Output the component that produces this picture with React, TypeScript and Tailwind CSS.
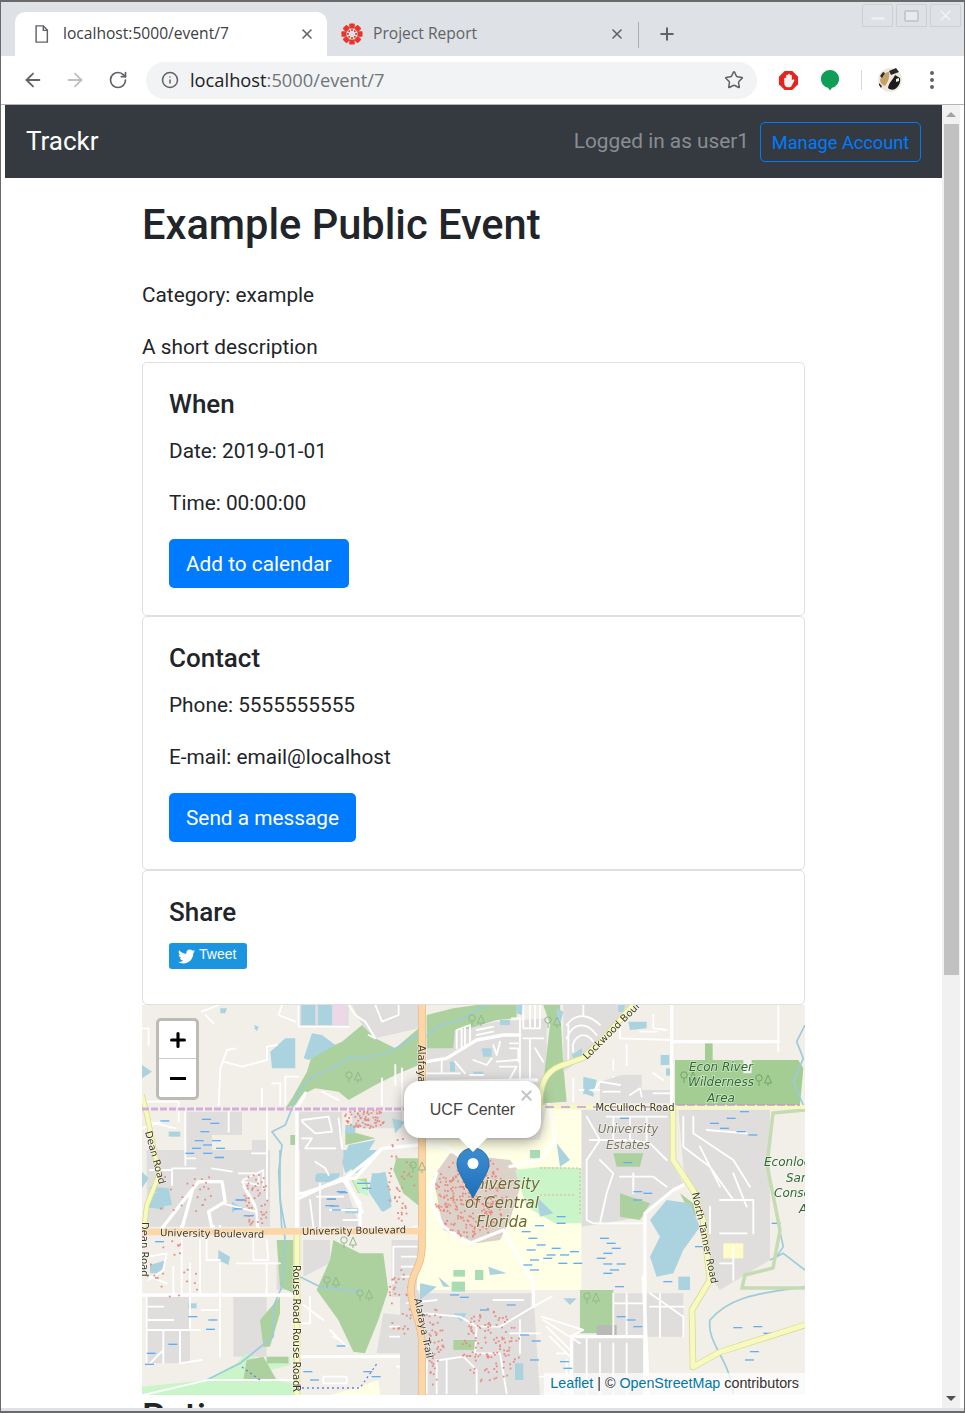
import type { ReactNode } from 'react'
import { ArrowLeft, ArrowRight, RotateCw, Info, Star, X, Plus } from 'lucide-react'
import { FaTwitter } from 'react-icons/fa'

// ─── Map colours ──────────────────────────────────────────────────────────────

const GREY = '#dfdedd'
const GREEN = '#add19e'
const MINT = '#c9f5c9'
const WATER = '#aad3df'
const CAMPUS = '#ffffe5'

// Each layer is traced at 3x from one part of the map, so coordinates are
// local to its origin and scaled back down by the group transform.
interface MapLayer {
  x: number
  y: number
  fills: [string, string][]
  rivers?: string[]
  roads: string
  mains?: string
  dashes: [number, number][]
}

const LAYERS: MapLayer[] = [
  // lower left
  {
    x: 130,
    y: 1150,
    fills: [
      [GREY, 'M50 0L420 0L420 230L50 230Z'],
      ['#f2efe9', 'M36 232L860 232L860 760L36 760Z'],
      [GREY, 'M50 440L180 440L180 640L50 640Z'],
      [GREY, 'M310 440L410 440L410 620L310 620Z'],
      [GREY, 'M440 340L480 340L480 420L440 420Z'],
      [GREY, 'M760 490L865 500L865 610L740 610Z'],
      [GREY, 'M520 270L600 270L600 340L520 380Z'],
      [GREY, 'M785 270L865 270L865 440L785 440Z'],
      [GREY, 'M510 0L640 0L640 90L690 230L510 230Z'],
      [GREEN, 'M800 20L860 60L870 170L820 130L790 60Z'],
      ['#b9dc8f', 'M665 90L710 85L715 120L685 130Z'],
      [GREEN, 'M610 270L690 310L760 310L775 420L745 510L705 610L670 605L625 510L560 420L600 330Z'],
      [GREEN, 'M440 270L490 270L490 430L450 410Z'],
      [GREEN, 'M390 510L450 440L450 490L420 590L400 590Z'],
      [MINT, 'M36 710L230 690L320 640L350 610L400 640L480 620L480 645L420 660L430 690L490 700L490 735L36 735Z'],
      [GREEN, 'M350 630L400 620L440 690L340 690Z'],
      [GREEN, 'M410 620L475 620L475 640L410 640Z'],
      [CAMPUS, 'M600 735L690 710L745 690L750 735Z'],
      [WATER, 'M60 110L120 115L100 180L55 170Z'],
      [WATER, 'M290 145L330 170L290 200Z'],
      [WATER, 'M640 0L740 0L680 70L640 40Z'],
      [WATER, 'M725 70L765 70L785 170L760 185L730 130Z'],
      [WATER, 'M265 300L300 320L295 345L265 330Z'],
      [WATER, 'M560 70L630 70L620 95L560 95Z'],
      [WATER, 'M645 175L690 175L690 190L645 190Z'],
      [WATER, 'M175 460L200 460L200 475L175 475Z'],
      [WATER, 'M60 345L110 330L90 370L60 370Z'],
    ],
    rivers: [
      'M450 0L450 130L455 230L465 260L460 400L430 470L430 560L380 600L330 640L230 690',
      'M510 380L570 410L690 425',
    ],
    roads:
      'M155 260L155 435M210 270L210 430M130 350L130 435M180 340L180 435M270 340L270 430M370 270L370 330L415 330L410 270M50 440L50 640M50 470L100 470M50 510L130 510M50 540L210 540M100 540L100 640M150 540L150 640L215 630M270 440L270 620M180 440L180 540M215 480L265 480M55 320L110 310L100 360L55 390M60 380L110 400M230 270L230 330L270 330M320 340L450 340M410 340L410 435M60 640L100 600M580 680L650 680L650 700L580 700ZM40 735L235 690L490 690M540 150L550 230M790 290L860 290M790 290L790 400M815 320L860 320M815 350L860 350M815 380L860 380M520 465L580 510M540 440L540 520L490 520M600 540L650 590M610 560L630 570M780 530L860 530M780 560L860 560M800 650L860 650M810 670L860 670M890 650L950 650M60 60L130 60L130 130L60 130M135 70L300 70L300 130M220 0L220 90M340 90L400 60L400 120M340 110L380 180L380 230M270 180L270 230M560 140L640 140M600 180L680 180M570 100L570 230M640 210L690 210',
    mains:
      'M36 435L490 435M515 620L865 620M500 130L520 130L640 90L740 10M640 90L690 160L690 230M500 0L500 230M100 230L175 120L215 90L285 105L290 140L240 180L250 230M155 230L200 110',
    dashes: [[220, 10], [255, 22], [165, 10], [320, 150], [345, 197], [315, 175], [590, 148], [600, 168], [620, 125], [695, 100], [235, 510], [175, 500], [228, 538], [115, 583], [50, 610], [45, 643], [620, 588], [520, 665], [700, 665], [540, 690], [725, 680], [75, 275]],
  },
  // upper left
  {
    x: 142,
    y: 1005,
    fills: [
      [GREY, 'M130 320L300 320L300 390L210 390L210 490L130 490Z'],
      [GREY, 'M90 490L270 490L270 660L60 660Z'],
      [GREY, 'M330 405L375 405L375 490L330 490Z'],
      [GREY, 'M470 320L600 320L600 435L470 435Z'],
      [GREY, 'M470 0L620 0L620 65L470 65Z'],
      [GREY, 'M630 0L830 0L830 70L700 100L660 60Z'],
      [GREY, 'M630 320L780 320L780 370L630 370Z'],
      [GREY, 'M520 445L550 445L550 490L520 490Z'],
      ['#efd7ea', 'M575 0L610 0L610 65L575 65Z'],
      [GREEN, 'M430 310L450 280L495 200L510 150L600 110L660 60L700 100L760 130L830 70L830 180L760 210L700 240L620 285L590 260L520 250L480 270L460 300Z'],
      [GREEN, 'M610 375L700 400L610 420Z'],
      [GREEN, 'M760 460L830 460L830 590L780 540Z'],
      [GREEN, 'M445 390L460 390L460 420L445 420Z'],
      [WATER, 'M478 0L520 0L520 60L478 60Z'],
      [WATER, 'M528 0L570 0L570 60L528 60Z'],
      [WATER, 'M385 140L430 100L460 100L460 190L390 190Z'],
      [WATER, 'M485 160L510 85L540 90L580 120L500 165Z'],
      [WATER, 'M600 470L620 420L700 405L660 470L610 505Z'],
      [WATER, 'M690 510L730 500L750 590L720 620L680 560Z'],
      [WATER, 'M750 340L790 350L760 385Z'],
      [WATER, 'M20 570L80 550L90 600L20 610Z'],
      [WATER, 'M0 180L30 200L0 220Z'],
      [WATER, 'M0 500L20 520L0 550Z'],
      [WATER, 'M520 510L580 510L570 530L520 530Z'],
      [WATER, 'M80 380L115 380L115 395L80 395Z'],
      [WATER, 'M610 360L640 360L640 385L610 385Z'],
      [WATER, 'M338 60L350 65L345 78L338 72Z'],
      [WATER, 'M235 10L255 10L250 25L235 25Z'],
      [MINT, 'M630 520L670 530L680 575L650 560Z'],
    ],
    rivers: ['M830 90L770 125L720 150L620 160L570 190L510 215L470 260L450 310L430 360L390 380L420 420L410 500L415 590L430 670'],
    roads:
      'M230 300L235 190L255 135L280 130M245 170L300 185L375 165L375 125L405 120M360 250L360 305M390 235L415 235L415 300M430 215L470 215M430 300L430 215M470 0L470 65L620 65M540 260L590 285M130 320L130 480M130 460L160 460M160 490L90 490L90 540M210 490L270 500M260 320L260 380M480 345L560 335L570 380L520 385L480 350M480 400L510 400L490 430L580 430M590 340L600 430M375 320L375 585M330 445L375 445M520 470L550 490L560 510M620 0L640 30L670 50L700 100M680 90L700 100M700 0L720 50L770 30L770 0M760 180L760 240M720 220L720 300M780 190L780 300M10 290L110 290L110 350M0 370L60 350M20 350L100 370M180 20L230 0M190 30L215 55M420 0L410 30L460 50M0 70L20 70M20 70L20 120M290 505L350 505L350 540L300 530M300 530L340 600L350 670M240 595L340 620',
    mains: 'M465 670L465 310L490 265M470 580L600 520L640 520L720 430L830 420M610 520L660 620M60 670L130 580L170 530L240 530L250 590L200 620L210 670M120 670L150 560',
    dashes: [[180, 343], [205, 355], [175, 380], [158, 407], [210, 407], [183, 420], [150, 430], [222, 430], [130, 445], [183, 445], [218, 458], [55, 348], [645, 535], [660, 550], [555, 582], [550, 602], [570, 615], [590, 563], [280, 585], [275, 612], [305, 632]],
  },
  // east of Alafaya, north of the boundary line
  {
    x: 420,
    y: 1005,
    fills: [
      [GREY, 'M20 130L110 75L230 50L380 40L380 300L20 300Z'],
      [GREEN, 'M20 130L20 30L100 10L170 0L290 0L290 40L230 45L150 70L105 75L100 130L60 130Z'],
      [WATER, 'M290 0L310 0L305 30L290 25Z'],
      [WATER, 'M240 45L270 45L270 60L240 60Z'],
      [WATER, 'M185 130L215 130L215 155L190 155Z'],
      [WATER, 'M90 170L105 170L105 200L90 200Z'],
      [WATER, 'M160 200L190 200L190 210L160 210Z'],
    ],
    rivers: ['M20 95L60 60L110 50L160 20L200 0'],
    roads:
      'M110 130L110 75L150 60L150 110M125 130L125 70M135 120L135 65M170 75L220 65M170 90L220 80M275 40L300 40L300 80M310 0L310 70L360 70L360 0M330 0L330 70M345 0L345 70M300 80L300 240M310 100L370 100M240 110L230 150L220 120M270 115L300 115M270 130L295 130L295 170M160 165L200 180L215 160M230 170L290 165M20 205L120 205M65 170L65 205M105 170L135 205M240 185L290 185L270 220M330 100L330 220M345 130L370 170M150 210L190 210M40 230L40 300M80 240L80 300M120 240L120 300M160 235L160 300M200 240L240 240L240 300M280 240L280 300M320 240L320 300M60 270L300 260',
    mains: 'M20 170L80 160L170 105L250 90L300 90M20 230L350 225',
    dashes: [],
  },
  // lower right
  {
    x: 400,
    y: 1060,
    fills: [
      [CAMPUS, 'M70 240L420 240L440 140L545 150L545 690L50 690Z'],
      ['#f2efe9', 'M545 150L815 150L815 700L545 700Z'],
      [GREY, 'M545 150L815 150L815 310L850 370L730 470L545 500Z'],
      [GREY, 'M835 150L1110 150L1110 600L960 690L930 650L905 450L850 320Z'],
      ['#ddd2ca', 'M100 350L150 280L330 300L370 350L330 480L300 540L230 550L130 510Z'],
      [MINT, 'M345 330L430 320L545 325L545 490L465 490L380 440Z'],
      [GREY, 'M0 700L400 700L420 1005L0 1005Z'],
      [GREY, 'M515 830L730 830L730 1005L515 1005Z'],
      [GREY, 'M640 700L850 700L850 830L640 830Z'],
      [GREEN, 'M540 690L640 690L640 820L540 820Z'],
      ['#b9b9b9', 'M590 795L650 795L650 825L590 825Z'],
      [GREEN, 'M160 840L225 840L225 870L160 870Z'],
      [GREEN, 'M640 280L730 280L720 320L650 320Z'],
      [GREEN, 'M660 400L750 430L720 480L660 470Z'],
      [GREEN, 'M840 400L880 430L890 470L860 440Z'],
      ['#fffcc8', 'M970 550L1030 550L1030 595L970 595Z'],
      ['#a9dbb4', 'M155 665L195 665L195 695L155 695Z'],
      ['#a9dbb4', 'M160 630L195 630L195 650L160 650Z'],
      ['#a9dbb4', 'M225 630L250 630L250 660L225 660Z'],
      ['#a9dbb4', 'M390 270L420 270L420 295L390 295Z'],
      [WATER, 'M750 480L800 420L870 430L900 500L850 570L820 640L770 650L750 590L780 530Z'],
      [WATER, 'M410 410L460 460L420 470Z'],
      [WATER, 'M470 250L510 300L480 320Z'],
      [WATER, 'M60 670L110 680L60 720Z'],
      [WATER, 'M115 650L150 680L130 680Z'],
      [WATER, 'M265 620L320 640L270 645Z'],
      [WATER, 'M835 650L870 650L870 690L835 690Z'],
      [WATER, 'M490 715L530 715L510 735Z'],
      [WATER, 'M160 760L200 760L185 785Z'],
      [WATER, 'M440 30L480 90L440 110Z'],
      [WATER, 'M550 50L590 60L580 110L550 100Z'],
      [WATER, 'M345 910L370 910L370 960L345 960Z'],
    ],
    rivers: ['M1215 680C1100 700 1000 700 930 780C920 850 990 900 1000 1000M1110 600L1150 580L1215 630M1130 470L1150 560L1130 590'],
    roads:
      'M560 170L600 240L560 300L560 480L580 490L730 490M600 300L640 340L620 400L600 490M640 170L640 240M690 170L690 240L750 250L800 300M740 170L740 250M570 240L680 240M660 350L760 350L800 380M700 340L700 400M620 170L800 170M850 170L850 260L930 320L1000 420M880 170L880 220L1000 300L1050 380M920 210L1040 220M900 260L960 380M1000 340L1040 440M960 420L1060 420L1060 520M930 440L930 520M960 520L1040 520M960 610L1000 610M1000 560L1000 660M640 730L730 730M680 700L680 830M780 700L780 830M750 740L850 740M400 740L455 710M75 760L180 770L230 800L300 800L400 740M230 800L225 880L300 880L320 1000M425 770L550 810L510 830M640 700L640 825M750 700L850 770L850 830M20 730L110 720M280 720L370 720M120 900L190 890L230 930L230 1000M80 900L80 1000M110 900L110 1000M140 900L140 1000M560 830L560 1000M600 850L600 1000M640 850L640 1000M680 850L680 1000M420 950L515 950M330 820L420 820M360 780L360 880M430 780L540 850M440 800L510 870M450 830L510 890M540 90L640 90L640 50M640 0L640 30M680 60L720 90M760 40L790 60M700 110L810 110M470 880L500 880M500 900L500 1000',
    mains:
      'M735 1000L735 460L820 390L850 375M515 830L730 830M515 830L515 1000M75 250L140 260L180 290M100 440L130 500L210 550L310 510L400 670L400 740M330 320L420 300L465 240L440 100L420 80M100 440L90 400L110 340M15 510L60 500M730 650L745 1000',
    dashes: [[365, 515], [405, 497], [470, 470], [470, 490], [385, 535], [410, 555], [455, 565], [380, 570], [440, 585], [480, 585], [510, 575], [390, 600], [430, 595], [475, 610], [520, 610], [370, 615], [390, 630], [600, 535], [620, 550], [610, 580], [635, 565], [590, 595], [610, 612], [650, 612], [630, 630], [610, 640], [645, 680], [790, 665], [885, 560], [1115, 490], [1000, 803], [1060, 800], [1090, 820], [1020, 848], [1050, 875], [1035, 900], [660, 175], [670, 308], [700, 395], [730, 400], [700, 420], [650, 770], [680, 780], [700, 800], [150, 705], [180, 712], [240, 750], [320, 735], [360, 825], [395, 843], [480, 905], [490, 925], [390, 900], [930, 190], [980, 175], [960, 205], [1020, 155], [1045, 225], [1010, 215]],
  },
  // upper right
  {
    x: 540,
    y: 1005,
    fills: [
      [GREEN, 'M10 230L30 60L10 0L60 0L70 180L80 290L10 295Z'],
      [GREEN, 'M195 0L240 50L190 60L180 30Z'],
      [GREY, 'M70 0L280 0L130 160L70 200Z'],
      [GREY, 'M245 210L305 210L305 255L395 255L395 295L180 295L180 230Z'],
      ['#a3cd92', 'M405 165L495 165L495 115L518 115L518 165L610 165L610 205L635 205L635 165L775 165L790 190L780 300L405 300Z'],
      [WATER, 'M95 150L125 130L130 155L100 160Z'],
      [WATER, 'M140 220L170 225L150 255L130 270Z'],
      [WATER, 'M265 50L320 50L320 70L270 75Z'],
      [WATER, 'M362 150L388 150L388 180L362 180Z'],
      [WATER, 'M378 190L392 190L392 212L378 212Z'],
      [WATER, 'M50 10L70 20L60 60L50 50Z'],
      [WATER, 'M235 0L255 0L250 20L235 20Z'],
    ],
    rivers: ['M795 60L770 110L790 160L760 230L790 300'],
    roads:
      'M80 60C110 20 150 30 180 60M80 100C100 50 140 50 170 90M100 140C90 100 130 70 160 110M85 60L85 170M130 30L130 0M240 100L395 105M340 30L340 70L380 75M260 120L260 180M715 0L715 140M240 60L240 100M300 80L350 80M160 260L180 230L240 240M190 260L240 260M270 270L300 250L305 275M340 265L395 265M100 220L100 290',
    mains: 'M395 0L395 300M395 110L715 110',
    dashes: [],
  },
]

// deterministic scatter of small red buildings
function scatter(cx: number, cy: number, rx: number, ry: number, n: number, seed: number) {
  const out: [number, number][] = []
  let s = seed
  for (let i = 0; i < n; i++) {
    s = (s * 9301 + 49297) % 233280
    const a = (s / 233280) * Math.PI * 2
    s = (s * 9301 + 49297) % 233280
    const r = Math.sqrt(s / 233280)
    out.push([cx + Math.cos(a) * rx * r, cy + Math.sin(a) * ry * r])
  }
  return out
}

const RED_DOTS = [
  ...scatter(470, 1195, 36, 42, 260, 7),
  ...scatter(490, 1345, 30, 38, 120, 11),
  ...scatter(432, 1345, 12, 40, 50, 21),
  ...scatter(364, 1118, 22, 10, 70, 31),
  ...scatter(255, 1200, 14, 28, 45, 41),
  ...scatter(180, 1190, 35, 25, 22, 51),
  ...scatter(400, 1300, 12, 35, 35, 61),
  ...scatter(400, 1175, 14, 45, 40, 71),
  ...scatter(175, 1270, 30, 30, 22, 81),
]

function TreeMark({ x, y, color = '#8fb98a' }: { x: number; y: number; color?: string }) {
  return (
    <g fill="none" stroke={color} strokeWidth={1}>
      <circle cx={x} cy={y} r={3.2} />
      <path d={`M${x} ${y + 3}v5M${x + 9} ${y - 3}l-3.5 8h7zM${x + 9} ${y + 5}v3`} />
    </g>
  )
}

function MapLabel({ x, y, children, rotate, size = 10, fill = '#3d3826', anchor = 'middle', italic = false }: {
  x: number
  y: number
  children: string
  rotate?: number
  size?: number
  fill?: string
  anchor?: 'middle' | 'start'
  italic?: boolean
}) {
  return (
    <text
      x={x}
      y={y}
      fontSize={size}
      fill={fill}
      textAnchor={anchor}
      fontStyle={italic ? 'italic' : undefined}
      fontFamily="'DejaVu Sans', sans-serif"
      stroke="#ffffff"
      strokeOpacity={0.5}
      strokeWidth={1.4}
      paintOrder="stroke"
      transform={rotate !== undefined ? `rotate(${rotate} ${x} ${y})` : undefined}
    >
      {children}
    </text>
  )
}

// ─── Map ──────────────────────────────────────────────────────────────────────

function MapDrawing() {
  return (
    <svg viewBox="142 1005 663 390" width={663} height={390} className="block blur-[0.45px]">
      <rect x={142} y={1005} width={663} height={390} fill="#f2efe9" />

      {LAYERS.map((l, i) => (
        <g key={i} transform={`translate(${l.x} ${l.y}) scale(0.3333)`}>
          {l.fills.map(([c, d], j) => <path key={j} d={d} fill={c} />)}
          <g fill="none" stroke="#9ccbdb" strokeWidth={5} strokeLinejoin="round">
            {l.rivers?.map((d, j) => <path key={j} d={d} />)}
          </g>
          <path d={l.roads} fill="none" stroke="#ffffff" strokeWidth={5.5} strokeLinejoin="round" strokeLinecap="round" />
          {l.mains && <path d={l.mains} fill="none" stroke="#ffffff" strokeWidth={10} strokeLinejoin="round" strokeLinecap="round" />}
          <g stroke="#63aef0" strokeWidth={4}>
            {l.dashes.map(([x, y], j) => <line key={j} x1={x} y1={y} x2={x + 27} y2={y} />)}
          </g>
        </g>
      ))}

      {/* buildings */}
      <g fill="#e98a80">
        {RED_DOTS.map(([x, y], i) => <rect key={i} x={x} y={y} width={1.8} height={1.8} />)}
      </g>

      {/* conservation boundary */}
      <path d="M805 1110L773 1113L767 1165L780 1230L773 1268L745 1275L742 1288L805 1288" fill="none" stroke="#c5dbb2" strokeWidth={3.5} />
      <path d="M540 1168L580 1168L580 1215M540 1195L575 1195" fill="none" stroke="#ef9a90" strokeWidth={0.8} strokeDasharray="2 2" />

      {/* major roads */}
      <g fill="none" strokeLinejoin="round">
        <path d="M422 1005L422 1245C422 1270 411 1270 411 1290C411 1310 422 1320 422 1345L422 1395" stroke="#e8b984" strokeWidth={7.5} />
        <path d="M422 1005L422 1245C422 1270 411 1270 411 1290C411 1310 422 1320 422 1345L422 1395" stroke="#fcd6a4" strokeWidth={6} />
        <path d="M142 1232L422 1231" stroke="#fcd6a4" strokeWidth={6.5} />
        <path d="M297 1235L297 1395" stroke="#d9d98e" strokeWidth={6.5} />
        <path d="M297 1235L297 1395" stroke="#f7fabf" strokeWidth={5} />
        <path d="M142 1095L147 1115L159 1175L147 1205L144 1228" stroke="#d9d98e" strokeWidth={5.5} />
        <path d="M142 1095L147 1115L159 1175L147 1205L144 1228" stroke="#f7fabf" strokeWidth={4} />
        <path d="M540 1105C540 1085 545 1072 560 1066L583 1058L607 1035L633 1005" stroke="#d9d98e" strokeWidth={6.5} />
        <path d="M540 1105C540 1085 545 1072 560 1066L583 1058L607 1035L633 1005" stroke="#f7fabf" strokeWidth={5} />
        <path d="M541 1107L805 1107" stroke="#f7fabf" strokeWidth={4} />
        <path d="M673 1105L673 1160L693 1190L703 1220L710 1280L692 1310L693 1367L720 1352L805 1325" stroke="#d9d98e" strokeWidth={6.5} />
        <path d="M673 1105L673 1160L693 1190L703 1220L710 1280L692 1310L693 1367L720 1352L805 1325" stroke="#f7fabf" strokeWidth={5} />
      </g>

      {/* boundary line */}
      <path d="M142 1109L540 1109" stroke="#d6aede" strokeWidth={3} strokeDasharray="7 2" fill="none" />
      <path d="M545 1107L670 1107" stroke="#d6aede" strokeWidth={2} strokeDasharray="9 7" fill="none" />
      <path d="M677 1105L800 1105" stroke="#c39ccf" strokeWidth={1.5} strokeDasharray="8 2" fill="none" />
      <path d="M297 1388L360 1388L378 1362" stroke="#6a7fdc" strokeWidth={1.3} strokeDasharray="2 3" fill="none" />
      <path d="M242 1367L260 1380" stroke="#6a7fdc" strokeWidth={1.3} strokeDasharray="2 3" fill="none" />

      <TreeMark x={349} y={1075} />
      <TreeMark x={472} y={1018} />
      <TreeMark x={327} y={1280} />
      <TreeMark x={360} y={1293} />
      <TreeMark x={344} y={1240} />
      <TreeMark x={413} y={1165} />
      <TreeMark x={587} y={1296} />
      <TreeMark x={548} y={1020} />
      <TreeMark x={684} y={1075} color="#6fa862" />
      <TreeMark x={759} y={1078} color="#6fa862" />

      {/* road and area labels */}
      <MapLabel x={212} y={1237} rotate={1}>University Boulevard</MapLabel>
      <MapLabel x={354} y={1234} rotate={-1}>University Boulevard</MapLabel>
      <MapLabel x={293} y={1265} rotate={90} anchor="start">Rouse Road</MapLabel>
      <MapLabel x={293} y={1328} rotate={90} anchor="start">Rouse Road</MapLabel>
      <MapLabel x={293} y={1385} rotate={90} anchor="start">R</MapLabel>
      <MapLabel x={414} y={1299} rotate={78} anchor="start">Alafaya Trail</MapLabel>
      <MapLabel x={418} y={1045} rotate={90} anchor="start">Alafaya</MapLabel>
      <MapLabel x={635} y={1111}>McCulloch Road</MapLabel>
      <MapLabel x={587} y={1060} rotate={-45} anchor="start">Lockwood Boul</MapLabel>
      <MapLabel x={145} y={1132} rotate={75} anchor="start">Dean Road</MapLabel>
      <MapLabel x={141} y={1222} rotate={90} anchor="start">Dean Road</MapLabel>
      <MapLabel x={692} y={1193} rotate={78} anchor="start">North Tanner Road</MapLabel>
      <MapLabel x={628} y={1133} size={12} fill="#7d7763" italic>University</MapLabel>
      <MapLabel x={628} y={1149} size={12} fill="#7d7763" italic>Estates</MapLabel>
      <MapLabel x={502} y={1189} size={15} fill="#6e6a2f" italic>University</MapLabel>
      <MapLabel x={502} y={1208} size={15} fill="#6e6a2f" italic>of Central</MapLabel>
      <MapLabel x={502} y={1227} size={15} fill="#6e6a2f" italic>Florida</MapLabel>
      <MapLabel x={721} y={1071} size={12} fill="#2f6a36" italic>Econ River</MapLabel>
      <MapLabel x={721} y={1086} size={12} fill="#2f6a36" italic>Wilderness</MapLabel>
      <MapLabel x={721} y={1102} size={12} fill="#2f6a36" italic>Area</MapLabel>
      <MapLabel x={764} y={1166} size={12} fill="#2f6a36" italic anchor="start">Econlock</MapLabel>
      <MapLabel x={786} y={1182} size={12} fill="#2f6a36" italic anchor="start">Sano</MapLabel>
      <MapLabel x={774} y={1197} size={12} fill="#2f6a36" italic anchor="start">Conser</MapLabel>
      <MapLabel x={799} y={1213} size={12} fill="#2f6a36" italic anchor="start">A</MapLabel>
    </svg>
  )
}

function MapPanel() {
  return (
    <div className="relative h-[390px] w-[663px] shrink-0 overflow-hidden font-['Liberation_Sans',sans-serif]">
      <MapDrawing />

      {/* Zoom control */}
      <div className="absolute left-[14px] top-[13px] w-[43px] rounded-[5px] border-[3px] border-[#bdbbb6] bg-white text-black">
        <div className="flex h-[38px] items-center justify-center border-b border-[#cccccc]">
          <Plus size={22} strokeWidth={3.4} />
        </div>
        <div className="flex h-[38px] items-center justify-center">
          <span className="h-[3px] w-[16px] bg-black" />
        </div>
      </div>

      {/* Marker */}
      <svg viewBox="0 0 34 52" width={34} height={52} className="absolute left-[314px] top-[142px]">
        <defs>
          <linearGradient id="pin" x1="0" y1="0" x2="0" y2="1">
            <stop offset="0" stopColor="#3d8ed0" />
            <stop offset="1" stopColor="#1e6fb8" />
          </linearGradient>
        </defs>
        <path d="M17 1C8 1 1 8 1 17c0 4 2 8 4 12l12 22 12-22c2-4 4-8 4-12C33 8 26 1 17 1z" fill="url(#pin)" stroke="#2a6ea8" />
        <circle cx={17} cy={16.5} r={5.5} fill="#ffffff" />
      </svg>

      {/* Popup */}
      <div className="absolute left-[262px] top-[76px] flex h-[57px] w-[137px] items-center justify-center rounded-[16px] bg-white text-[16px] text-[#444444] shadow-[0_3px_14px_rgba(0,0,0,0.4)]">
        UCF Center
        <X size={17} strokeWidth={2.6} className="absolute right-[6px] top-[6px] text-[#c3c3c3]" />
      </div>
      <div className="absolute left-[317px] top-[133px] h-0 w-0 border-x-[14px] border-t-[14px] border-x-transparent border-t-white" />

      {/* Attribution */}
      <div className="absolute bottom-0 right-0 bg-white/70 px-[6px] pb-[2px] text-[14.3px] leading-[20px] text-[#333333]">
        <span className="text-[#0078a8]">Leaflet</span> | © <span className="text-[#0078a8]">OpenStreetMap</span> contributors
      </div>
    </div>
  )
}

// ─── Browser chrome ───────────────────────────────────────────────────────────

function CanvasIcon() {
  const dots = [0, 45, 90, 135, 180, 225, 270, 315]
  return (
    <svg viewBox="0 0 24 24" width={22} height={22}>
      <g fill="#e8352b">
        {dots.map((a) => (
          <g key={a} transform={`rotate(${a} 12 12)`}>
            <rect x={9} y={0.5} width={6} height={5.5} rx={1} />
            <circle cx={12} cy={7.6} r={1.1} />
          </g>
        ))}
      </g>
    </svg>
  )
}

function TabStrip() {
  return (
    <div className="relative flex h-[54px] shrink-0 items-end bg-[#dee1e6] pl-[14px] font-['Open_Sans',sans-serif] text-[15.6px]">
      <div className="flex h-[44px] w-[312px] items-center rounded-t-[10px] bg-white pl-[19px] pr-[12px] text-[#3c4043]">
        <svg viewBox="0 0 16 20" width={15} height={18} fill="none" stroke="#5f6368" strokeWidth={1.6} className="mr-[14px]">
          <path d="M2 1h8l4.5 4.5V19H2zM10 1v5h4.5" />
        </svg>
        <span className="flex-1">localhost:5000/event/7</span>
        <X size={16} strokeWidth={2.4} className="text-[#5f6368]" />
      </div>
      <div className="flex h-[44px] w-[311px] items-center pl-[14px] pr-[13px] text-[#5f6368]">
        <span className="mr-[10px]"><CanvasIcon /></span>
        <span className="flex-1">Project Report</span>
        <X size={16} strokeWidth={2.4} className="text-[#5f6368]" />
      </div>
      <div className="mb-[8px] h-[26px] w-px bg-[#a9acb0]" />
      <Plus size={20} strokeWidth={2.4} className="mb-[12px] ml-[18px] text-[#5f6368]" />
      {/* Window buttons */}
      <div className="absolute right-[3px] top-[2px] flex gap-[3px]">
        <div className="flex h-[23px] w-[31px] items-center justify-center rounded-t-[2px] border border-[#cdd0d4]">
          <span className="mt-[6px] h-[3px] w-[14px] rounded-sm bg-[#eceef0]" />
        </div>
        <div className="flex h-[23px] w-[31px] items-center justify-center rounded-t-[2px] border border-[#cdd0d4]">
          <span className="h-[12px] w-[15px] rounded-[2px] border-2 border-[#c6c9cd] bg-[#e8eaed]" />
        </div>
        <div className="flex h-[23px] w-[31px] items-center justify-center rounded-t-[2px] border border-[#cdd0d4]">
          <X size={17} strokeWidth={2.4} className="text-[#f2f3f5]" />
        </div>
      </div>
    </div>
  )
}

function AdblockIcon() {
  return (
    <svg viewBox="0 0 22 22" width={21} height={21}>
      <path d="M7 1h8l6 6v8l-6 6H7l-6-6V7z" fill="#e8231f" />
      <path d="M6.5 13V9a1 1 0 0 1 2 0V6a1 1 0 0 1 2 0V5a1 1 0 0 1 2 0v1a1 1 0 0 1 2 0v5l1-1a1 1 0 0 1 1.5 1.3L14 17a2.5 2.5 0 0 1-2 1h-2c-2 0-3.5-2-3.5-5z" fill="#f4f4f4" />
    </svg>
  )
}

function AvatarIcon() {
  return (
    <svg viewBox="0 0 26 26" width={26} height={26}>
      <circle cx={13} cy={13} r={12} fill="#efe9dd" />
      <path d="M3 13c2-6 6-8 9-8 1 5-1 10-4 14-3-1-5-3-5-6z" fill="#c6a26a" />
      <path d="M11 21c1-6 5-8 7-13l5 3c1 5-2 9-5 11-2 1-5 1-7-1z" fill="#1c1c1c" />
      <path d="M12 4l7-3 3 4-8 3zM3 9l3-4 2 1-3 5zM2 16l3 3-1 2-2-3z" fill="#2a2a2a" />
      <path d="M19 12l3-1 0 3-3 1z" fill="#f5f2ea" />
    </svg>
  )
}

function Toolbar() {
  return (
    <div className="flex h-[49px] shrink-0 items-center border-b border-[#b5b5b5] bg-white pl-[21px] text-[#5f6368]">
      <ArrowLeft size={22} strokeWidth={2} />
      <ArrowRight size={22} strokeWidth={2} className="ml-[20px] text-[#bdc0c4]" />
      <RotateCw size={20} strokeWidth={2} className="ml-[22px]" />
      <div className="ml-[18px] flex h-[37px] w-[611px] items-center rounded-full bg-[#f1f3f4] pl-[15px] pr-[13px] font-['Open_Sans',sans-serif] text-[18.3px]">
        <Info size={18} strokeWidth={2} />
        <span className="ml-[11px] flex-1 text-[#202124]">
          localhost<span className="text-[#70757a]">:5000/event/7</span>
        </span>
        <Star size={20} strokeWidth={1.8} />
      </div>
      {/* Extensions */}
      <div className="ml-[21px]"><AdblockIcon /></div>
      <svg viewBox="0 0 20 22" width={20} height={22} className="ml-[21px]">
        <path d="M10 1a9 9 0 0 1 2 17.8L10 21.5 8 18.8A9 9 0 0 1 10 1z" fill="#0f9d58" />
      </svg>
      <div className="ml-[21px] h-[20px] w-px bg-[#d5d7da]" />
      <div className="ml-[15px]"><AvatarIcon /></div>
      <div className="ml-[27px] flex flex-col gap-[3px]">
        <span className="h-[4px] w-[4px] rounded-full bg-[#5f6368]" />
        <span className="h-[4px] w-[4px] rounded-full bg-[#5f6368]" />
        <span className="h-[4px] w-[4px] rounded-full bg-[#5f6368]" />
      </div>
    </div>
  )
}

function Scrollbar() {
  return (
    <div className="flex w-[18px] shrink-0 flex-col items-center bg-[#f1f1f1]">
      <div className="flex h-[19px] items-center justify-center">
        <span className="h-0 w-0 border-x-[5px] border-b-[5px] border-x-transparent border-b-[#a3a3a3]" />
      </div>
      <div className="h-[851px] w-[15px] bg-[#c1c1c1]" />
      <div className="flex-1" />
      <div className="flex h-[19px] items-center justify-center">
        <span className="h-0 w-0 border-x-[5px] border-t-[5px] border-x-transparent border-t-[#505050]" />
      </div>
    </div>
  )
}

// ─── Page ─────────────────────────────────────────────────────────────────────

function Card({ title, children }: { title: string; children: ReactNode }) {
  return (
    <div className="rounded-[5px] border border-[#dfdfdf] px-[26px] pb-[27px] pt-[26px]">
      <h5 className="mb-[16px] text-[26px] font-medium leading-[31px]">{title}</h5>
      {children}
    </div>
  )
}

function BlueButton({ children }: { children: string }) {
  return (
    <button className="h-[49px] rounded-[5px] bg-[#007bff] px-[17px] pt-[2px] text-[20.8px] text-white">{children}</button>
  )
}

export default function App() {
  return (
    <div className="flex h-[1413px] w-[965px] flex-col overflow-hidden border-x border-t-2 border-b-2 border-[#6a6a6a] bg-[#dee1e6]">
      <div className="flex min-h-0 flex-1 flex-col pb-[3px]">
        <TabStrip />
        <Toolbar />
        <div className="flex min-h-0 flex-1 overflow-hidden bg-white pl-[4px] pr-[4px]">
          <div className="min-w-0 flex-1 overflow-hidden font-['Roboto',sans-serif] text-[20.8px] leading-[31px] text-[#212529]">
            <nav className="flex h-[73px] items-center bg-[#343a40] pl-[21px] pr-[21px]">
              <span className="flex-1 text-[26px] text-white">Trackr</span>
              <span className="text-[#8a8d91]">Logged in as user1</span>
              <span className="ml-[11px] flex h-[40px] w-[161px] items-center justify-center rounded-[5px] border border-[#007bff] pt-[2px] text-[18.2px] text-[#007bff]">
                Manage Account
              </span>
            </nav>

            <main className="ml-[137px] w-[663px]">
              <h1 className="mb-[30px] mt-[22px] text-[41.6px] font-medium leading-[50px]">Example Public Event</h1>
              <p className="mb-[21px]">Category: example</p>
              <p className="-mb-[1px]">A short description</p>
              <Card title="When">
                <p className="mb-[21px]">Date: 2019-01-01</p>
                <p className="mb-[20px]">Time: 00:00:00</p>
                <BlueButton>Add to calendar</BlueButton>
              </Card>
              <Card title="Contact">
                <p className="mb-[21px]">Phone: 5555555555</p>
                <p className="mb-[20px]">E-mail: email@localhost</p>
                <BlueButton>Send a message</BlueButton>
              </Card>
              <div className="h-[135px] rounded-[5px] border border-[#dfdfdf] px-[26px] pt-[26px]">
                <h5 className="mb-[15px] text-[26px] font-medium leading-[31px]">Share</h5>
                <span className="flex h-[26px] w-[78px] items-center rounded-[3px] bg-[#1b95e0] pl-[9px] font-['Liberation_Sans',sans-serif] text-[14px] text-white">
                  <FaTwitter size={17} className="mr-[4px]" />
                  <span className="mb-[4px] leading-[20px]">Tweet</span>
                </span>
              </div>
              <MapPanel />
              <h3 className="text-[36.4px] font-medium leading-[44px]">Ratings</h3>
            </main>
          </div>
          <Scrollbar />
        </div>
      </div>
    </div>
  )
}
